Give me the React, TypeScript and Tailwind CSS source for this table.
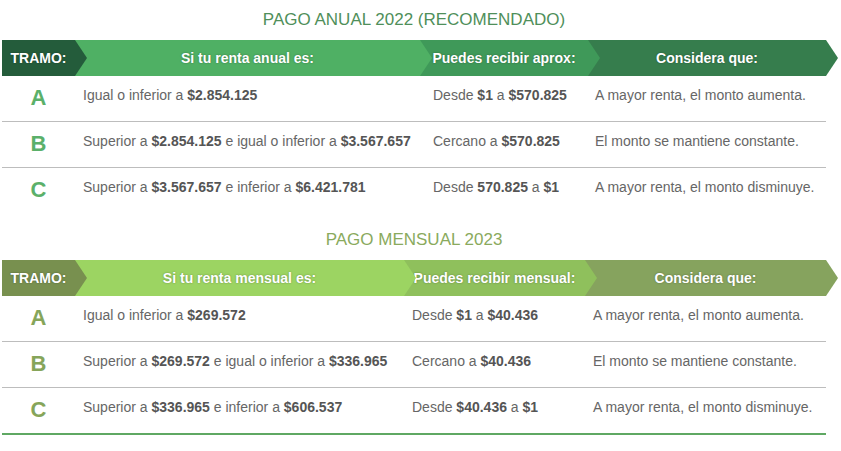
import React from 'react'

// ── data ──────────────────────────────────────────────────────────────────
type Part = string | { b: string }

interface Row {
  tramo: string
  renta: Part[]
  recibe: Part[]
  nota: string
}

interface Section {
  title: string
  titleColor: string
  letterColor: string
  headers: string[]
  colors: string[]
  widths: number[]
  pads: string[]
  rows: Row[]
  bottomLine?: boolean
}

const anual: Section = {
  title: 'PAGO ANUAL 2022 (RECOMENDADO)',
  titleColor: 'text-[#4f8f5a]',
  letterColor: 'text-[#5bb06a]',
  headers: ['TRAMO:', 'Si tu renta anual es:', 'Puedes recibir aprox:', 'Considera que:'],
  colors: ['bg-[#245c3b]', 'bg-[#4fb064]', 'bg-[#3f9959]', 'bg-[#367d4d]'],
  widths: [73, 345, 168, 238],
  pads: ['pl-2', 'pl-[13px]', 'pl-[7px]'],
  rows: [
    { tramo: 'A', renta: ['Igual o inferior a ', { b: '$2.854.125' }], recibe: ['Desde ', { b: '$1' }, ' a ', { b: '$570.825' }], nota: 'A mayor renta, el monto aumenta.' },
    { tramo: 'B', renta: ['Superior a ', { b: '$2.854.125' }, ' e igual o inferior a ', { b: '$3.567.657' }], recibe: ['Cercano a ', { b: '$570.825' }], nota: 'El monto se mantiene constante.' },
    { tramo: 'C', renta: ['Superior a ', { b: '$3.567.657' }, ' e inferior a ', { b: '$6.421.781' }], recibe: ['Desde ', { b: '570.825' }, ' a ', { b: '$1' }], nota: 'A mayor renta, el monto disminuye.' },
  ],
}

const mensual: Section = {
  title: 'PAGO MENSUAL 2023',
  titleColor: 'text-[#8aaa5d]',
  letterColor: 'text-[#86a55a]',
  headers: ['TRAMO:', 'Si tu renta mensual es:', 'Puedes recibir mensual:', 'Considera que:'],
  colors: ['bg-[#78904f]', 'bg-[#9cd462]', 'bg-[#8fc05c]', 'bg-[#86a35e]'],
  widths: [73, 329, 181, 241],
  pads: ['pl-2', 'pl-2', 'pl-2'],
  bottomLine: true,
  rows: [
    { tramo: 'A', renta: ['Igual o inferior a ', { b: '$269.572' }], recibe: ['Desde ', { b: '$1' }, ' a ', { b: '$40.436' }], nota: 'A mayor renta, el monto aumenta.' },
    { tramo: 'B', renta: ['Superior a ', { b: '$269.572' }, ' e igual o inferior a ', { b: '$336.965' }], recibe: ['Cercano a ', { b: '$40.436' }], nota: 'El monto se mantiene constante.' },
    { tramo: 'C', renta: ['Superior a ', { b: '$336.965' }, ' e inferior a ', { b: '$606.537' }], recibe: ['Desde ', { b: '$40.436' }, ' a ', { b: '$1' }], nota: 'A mayor renta, el monto disminuye.' },
  ],
}

// ── bits ──────────────────────────────────────────────────────────────────
function Text({ parts }: { parts: Part[] }) {
  return (
    <>
      {parts.map((p, i) =>
        typeof p === 'string'
          ? <span key={i}>{p}</span>
          : <b key={i} className="font-bold text-[#555]">{p.b}</b>
      )}
    </>
  )
}

const zs = ['z-40', 'z-30', 'z-20', 'z-10']

function HeaderBar({ s }: { s: Section }) {
  return (
    <div className="flex h-[36px]">
      {s.headers.map((h, i) => (
        <div
          key={h}
          className={`relative ${zs[i]} ${s.colors[i]} -mr-[12px] flex h-full items-center justify-center pr-[12px] text-[14px] font-bold text-white [clip-path:polygon(0_0,calc(100%-12px)_0,100%_50%,calc(100%-12px)_100%,0_100%)] [text-shadow:0_0_2px_rgba(0,0,0,0.35)]`}
          style={{ width: s.widths[i] + 12 }}>
          {h}
        </div>
      ))}
    </div>
  )
}

function Table({ s }: { s: Section }) {
  const cols = s.widths.map(w => `${w}px`).join(' ')
  return (
    <div>
      <div className={`flex h-[40px] items-center justify-center text-[17px] ${s.titleColor}`}>{s.title}</div>
      <HeaderBar s={s} />
      <div className={s.bottomLine ? 'border-b-2 border-[#5fa863]' : ''}>
        {s.rows.map((r, i) => (
          <div
            key={r.tramo}
            className={`grid h-[45px] text-[14px] leading-5 text-[#666] ${i < s.rows.length - 1 ? 'h-[46px] border-b border-[#bdbdbd]' : ''}`}
            style={{ gridTemplateColumns: cols }}>
            <div className={`pt-[8px] text-center text-[22px] font-bold leading-[28px] ${s.letterColor}`}>{r.tramo}</div>
            <div className={`pt-[9px] ${s.pads[0]}`}><Text parts={r.renta} /></div>
            <div className={`pt-[9px] ${s.pads[1]}`}><Text parts={r.recibe} /></div>
            <div className={`pt-[9px] ${s.pads[2]}`}>{r.nota}</div>
          </div>
        ))}
      </div>
    </div>
  )
}

export default function App() {
  return (
    <div className="h-[451px] w-[841px] bg-white font-['Liberation_Sans',Arial,sans-serif]">
      <div className="ml-[2px] flex w-[824px] flex-col gap-[7px]">
        <Table s={anual} />
        <Table s={mensual} />
      </div>
    </div>
  )
}
